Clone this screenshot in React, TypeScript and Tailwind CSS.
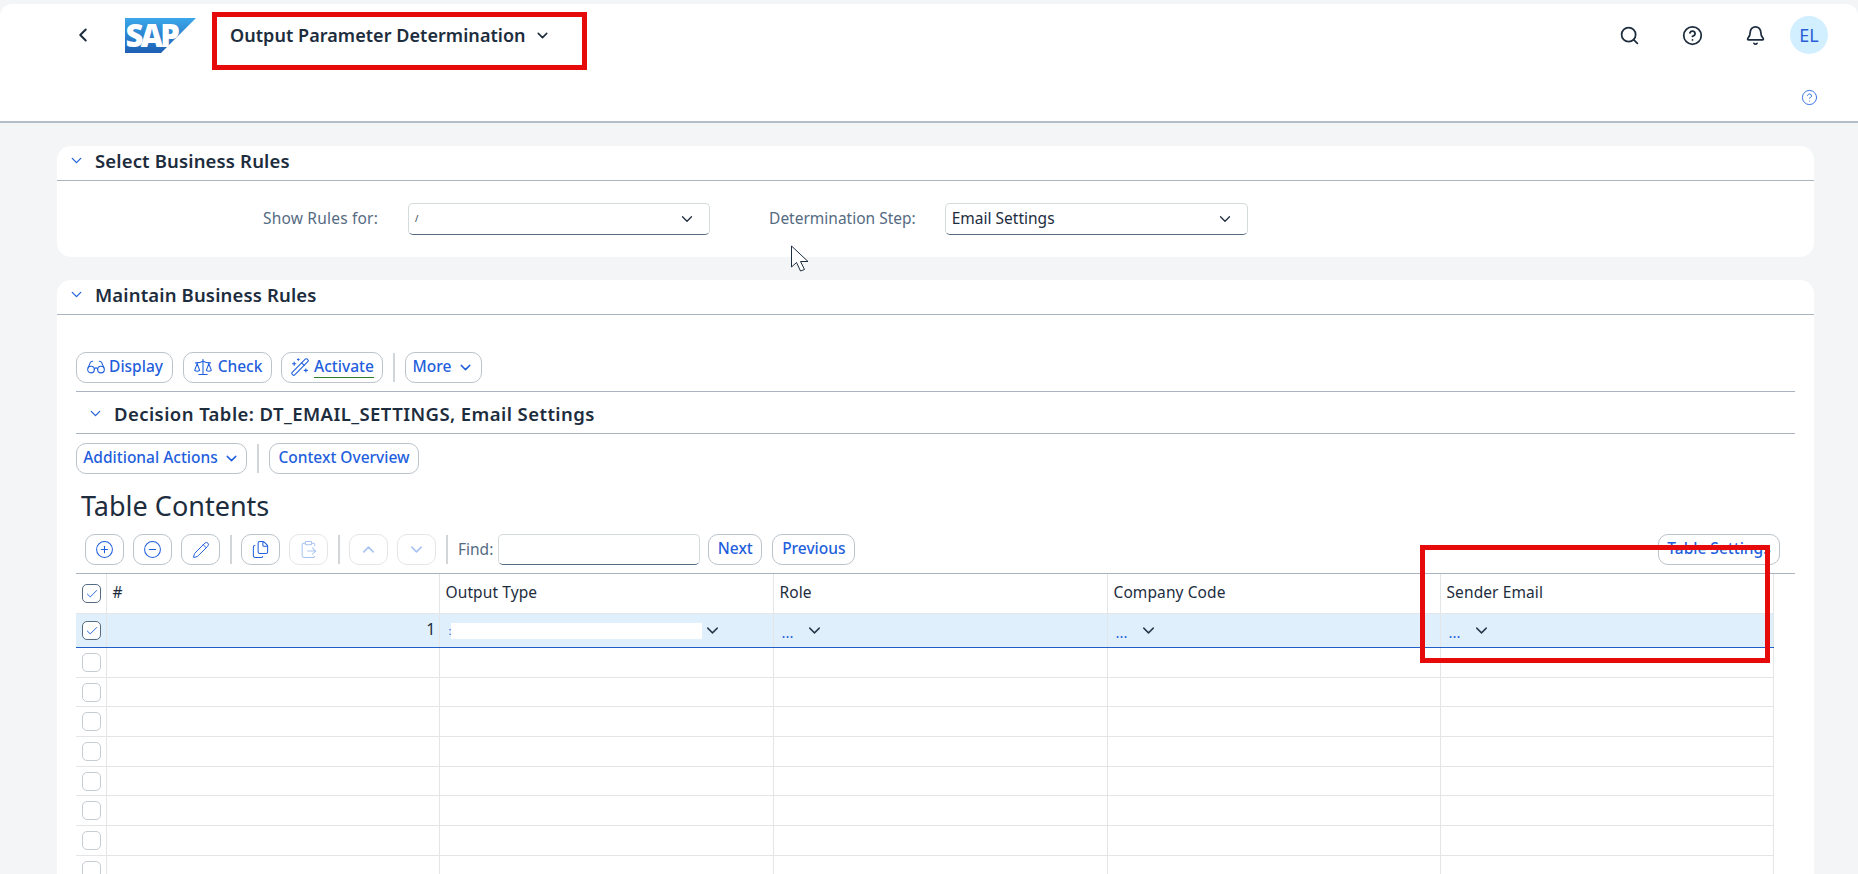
import React from "react";
import { Bell, Check, ChevronDown, ChevronLeft, ChevronUp, CircleHelp, CircleMinus, CirclePlus, Files, Glasses, Pencil, Scale, Search, WandSparkles, ClipboardPaste } from "lucide-react";

const cols = "grid grid-cols-[30.5px_333px_334px_334px_333px_333.5px] w-[1698px]";

function Btn({ children, className = "" }: { children: React.ReactNode; className?: string }) {
  return (
    <div className={`h-[31px] box-border pb-[1px] rounded-[10px] border border-[#bcc3ca] bg-white flex items-center justify-center text-[#1f5fdc] text-[15.5px] font-medium whitespace-nowrap ${className}`}>
      {children}
    </div>
  );
}

function IconBtn({ children, off = false }: { children: React.ReactNode; off?: boolean }) {
  return (
    <div className={`h-[31px] w-[39px] box-border rounded-[10px] border flex items-center justify-center ${off ? "border-[#e3e6e9] text-[#a9c4f2]" : "border-[#bcc3ca] text-[#1f5fdc]"}`}>
      {children}
    </div>
  );
}

function Sep({ className = "" }: { className?: string }) {
  return <div className={`w-[2px] h-[29px] bg-[#d3d6d9] ${className}`} />;
}

function Box({ checked = false }: { checked?: boolean }) {
  return (
    <div className={`w-[19px] h-[19px] box-border rounded-[5px] border flex items-center justify-center ${checked ? "border-[#556b82] bg-white" : "border-[#c5ccd3] bg-white"}`}>
      {checked && <Check size={14} strokeWidth={1.6} className="text-[#1f5fdc]" />}
    </div>
  );
}

function PanelHead({ title }: { title: string }) {
  return (
    <div className="h-[35px] box-border pb-[5px] flex items-center border-b border-[#a9b4be]">
      <ChevronDown size={17} strokeWidth={1.8} className="ml-[11px] text-[#1f5fdc]" />
      <span className="ml-[10px] text-[18.5px] tracking-[0.15px] font-semibold text-[#1d2d3e]">{title}</span>
    </div>
  );
}

function Selector({ value, tiny = false, className = "" }: { value: string; tiny?: boolean; className?: string }) {
  return (
    <div className={`h-[32px] box-border rounded-[5px] border border-[#d5dadd] border-b-[#556b82] bg-white flex items-center justify-between pl-[6px] pr-[13px] text-[15.5px] text-[#1d2d3e] ${className}`}>
      <span className={tiny ? "text-[9px]" : ""}>{value}</span>
      <ChevronDown size={18} strokeWidth={1.7} className="text-[#1d2d3e]" />
    </div>
  );
}

function EmptyRow() {
  return (
    <div className={`${cols} h-[29.7px] box-border border-b border-[#e3e5e7]`}>
      <div className="flex items-center justify-start pl-[6px] border-r border-[#e3e5e7]"><Box /></div>
      {[0, 1, 2, 3, 4].map((i) => <div key={i} className="border-r border-[#e3e5e7]" />)}
    </div>
  );
}

function Dots() {
  return <span className="text-[#1f5fdc] text-[15px] leading-none pt-[4px]">...</span>;
}

function RowChevron() {
  return <ChevronDown size={19} strokeWidth={1.8} className="text-[#26364a]" />;
}

function HeadCell({ text }: { text: string }) {
  return <div className="flex items-center pl-[6px] pb-[2px] text-[15.5px] tracking-[0.1px] text-[#1d2d3e] border-r border-[#e3e5e7]">{text}</div>;
}

export default function App() {
  return (
    <div className="relative w-full h-[874px] overflow-hidden bg-[#f4f5f7] pt-[4px] text-[#1d2d3e]" style={{ fontFamily: '"Noto Sans", "Liberation Sans", sans-serif' }}>
      <header className="h-[119px] box-border bg-white rounded-t-[12px] border-b-2 border-[#b4bec8]">
        <div className="h-[62px] flex items-center">
          <ChevronLeft size={22} strokeWidth={2.2} className="ml-[72px] text-[#1d2d3e]" />
          <svg width="72" height="52" viewBox="0 -8 72 52" className="ml-[31px] mt-[1px]">
            <defs>
              <linearGradient id="sapg" x1="0" y1="0" x2="0" y2="1">
                <stop offset="0" stopColor="#3ba7ea" />
                <stop offset="1" stopColor="#1d5fb4" />
              </linearGradient>
            </defs>
            <polygon points="0,0 71,0 36,35 0,35" fill="url(#sapg)" />
            <text x="0.5" y="29" fill="#fff" fontSize="31" fontWeight="800" letterSpacing="-2.8" fontFamily="'Open Sans', sans-serif">SAP</text>
          </svg>
          <span className="ml-[33px] text-[18px] tracking-[0.05px] font-semibold text-[#1d2d3e]">Output Parameter Determination</span>
          <ChevronDown size={17} strokeWidth={2.2} className="ml-[8px] text-[#1d2d3e]" />
          <div className="ml-auto mr-[30px] flex items-center gap-[42px] text-[#1d2d3e]">
            <Search size={21} strokeWidth={2} />
            <CircleHelp size={21} strokeWidth={2} />
            <Bell size={21} strokeWidth={2} />
            <div className="w-[38px] h-[38px] -ml-[18px] rounded-full bg-[#d1efff] flex items-center justify-center text-[#2a5ed6] text-[18px]">EL</div>
          </div>
        </div>
        <div className="flex justify-end pr-[40px] pt-[23px]">
          <CircleHelp size={17} strokeWidth={1.3} className="text-[#2a6ae0]" />
        </div>
      </header>

      <section className="ml-[57px] mr-[44px] mt-[23px] h-[111px] bg-white rounded-[14px]">
        <PanelHead title="Select Business Rules" />
        <div className="flex items-center pt-[22px]">
          <span className="ml-[206px] text-[15.5px] tracking-[0.2px] text-[#556b82]">Show Rules for:</span>
          <Selector value="/" tiny className="ml-[30px] w-[302px]" />
          <span className="ml-[59px] text-[15.5px] text-[#556b82]">Determination Step:</span>
          <Selector value="Email Settings" className="ml-[29px] w-[303px]" />
        </div>
      </section>

      <section className="ml-[57px] mr-[44px] mt-[23px] h-[700px] bg-white rounded-t-[14px]">
        <PanelHead title="Maintain Business Rules" />
        <div className="px-[19px]">
          <div className="h-[77px] box-border pt-[37px] border-b border-[#a9b4be] flex items-start gap-[10px]">
            <Btn className="w-[97px] gap-[3px]"><Glasses size={20} strokeWidth={1.3} />Display</Btn>
            <Btn className="w-[89px] gap-[5px]"><Scale size={20} strokeWidth={1.3} />Check</Btn>
            <Btn className="w-[102px] gap-[4px] -ml-[1px]"><WandSparkles size={20} strokeWidth={1.3} /><span className="border-b border-[#2b7c2b] leading-[21px]">Activate</span></Btn>
            <Sep className="mt-[1px]" />
            <Btn className="w-[77px] gap-[6px]">More<ChevronDown size={17} strokeWidth={2} /></Btn>
          </div>
          <div className="h-[42px] box-border pt-[2px] flex items-center border-b border-[#a9b4be]">
            <ChevronDown size={17} strokeWidth={1.8} className="ml-[11px] text-[#1f5fdc]" />
            <span className="ml-[10px] text-[18.5px] tracking-[0.43px] font-semibold text-[#1d2d3e]">Decision Table: DT_EMAIL_SETTINGS, Email Settings</span>
          </div>
          <div className="pt-[9px] flex items-center gap-[10px]">
            <Btn className="w-[171px] gap-[5px]">Additional Actions<ChevronDown size={17} strokeWidth={2} /></Btn>
            <Sep />
            <Btn className="w-[150px]">Context Overview</Btn>
          </div>
          <div className="ml-[5px] mt-[11px] h-[40px] flex items-center text-[27px] leading-none text-[#1d2d3e]">Table Contents</div>
          <div className="h-[31px] mt-[9px] flex items-center text-[15.5px]">
            <div className="ml-[9px] flex items-center gap-[9px]">
              <IconBtn><CirclePlus size={19} strokeWidth={1.3} /></IconBtn>
              <IconBtn><CircleMinus size={19} strokeWidth={1.3} /></IconBtn>
              <IconBtn><Pencil size={18} strokeWidth={1.3} /></IconBtn>
              <Sep className="ml-[1px]" />
              <IconBtn><Files size={19} strokeWidth={1.3} /></IconBtn>
              <IconBtn off><ClipboardPaste size={19} strokeWidth={1.3} /></IconBtn>
              <Sep className="ml-[1px]" />
              <IconBtn off><ChevronUp size={19} strokeWidth={2} /></IconBtn>
              <IconBtn off><ChevronDown size={19} strokeWidth={2} /></IconBtn>
              <Sep className="ml-[1px]" />
            </div>
            <span className="ml-[10px] text-[#556b82]">Find:</span>
            <div className="ml-[5px] w-[202px] h-[31px] box-border rounded-[5px] border border-[#d5dadd] border-b-[#556b82]" />
            <Btn className="ml-[8px] w-[54px]">Next</Btn>
            <Btn className="ml-[10px] w-[83px]">Previous</Btn>
            <Btn className="ml-auto mr-[15px] w-[122px]">Table Settings</Btn>
          </div>
          <div className="mt-[8px] border-t border-[#a9b4be]">
            <div className={`${cols} h-[40px] box-border border-b border-[#e3e5e7]`}>
              <div className="flex items-center pl-[6px] border-r border-[#e3e5e7]"><Box checked /></div>
              <HeadCell text="#" />
              <HeadCell text="Output Type" />
              <HeadCell text="Role" />
              <HeadCell text="Company Code" />
              <HeadCell text="Sender Email" />
            </div>
            <div className={`${cols} h-[34px] box-border bg-[#dff0fc] border-b border-[#1f5fc8]`}>
              <div className="flex items-center pl-[6px] border-r border-[#e3e5e7]"><Box checked /></div>
              <div className="flex items-center justify-end pr-[3px] pb-[4px] text-[16px] border-r border-[#e3e5e7]">1</div>
              <div className="flex items-center pl-[9px] border-r border-[#e3e5e7]">
                <span className="w-[2px] text-[#1f5fdc] text-[11px] leading-none">:</span>
                <div className="w-[251px] h-[16px] bg-white" />
                <div className="ml-[1px]"><RowChevron /></div>
              </div>
              <div className="flex items-center pl-[8px] gap-[11px] border-r border-[#e3e5e7]"><Dots /><RowChevron /></div>
              <div className="flex items-center pl-[8px] gap-[11px] border-r border-[#e3e5e7]"><Dots /><RowChevron /></div>
              <div className="flex items-center pl-[8px] gap-[11px] border-r border-[#e3e5e7]"><Dots /><RowChevron /></div>
            </div>
            {[0, 1, 2, 3, 4, 5, 6, 7].map((i) => <EmptyRow key={i} />)}
          </div>
        </div>
      </section>

      {/* red annotation boxes and mouse pointer lying over the page */}
      <div className="absolute left-[212px] top-[12px] w-[375px] h-[58px] border-[5px] border-[#e60a0a]" />
      <div className="absolute left-[1420px] top-[545px] w-[350px] h-[118px] border-[5px] border-[#e60a0a]" />
      <svg className="absolute left-[790px] top-[245px]" width="22" height="28" viewBox="0 0 22 28">
        <path d="M1.5 1 V22 L6.5 17.5 L10.5 26 L14.5 24.5 L10.5 16.5 H18 Z" fill="#fff" stroke="#1d2d3e" strokeWidth="1" />
      </svg>
    </div>
  );
}
